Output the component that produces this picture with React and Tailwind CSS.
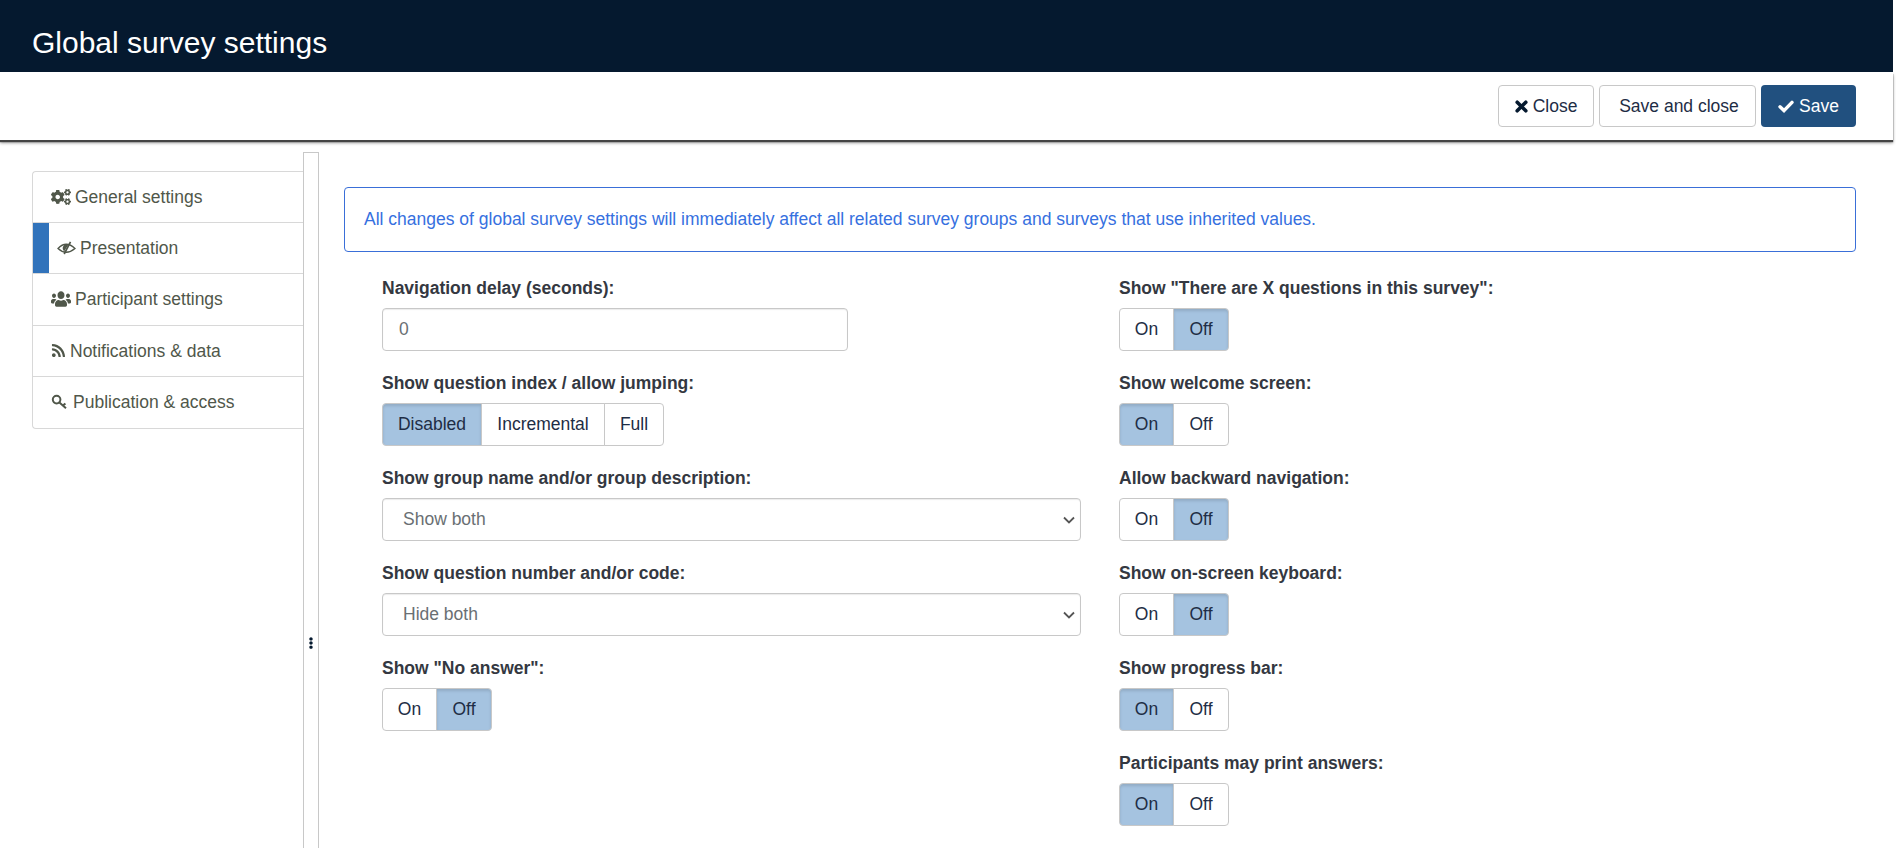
import { useState } from "react";
import { FaCogs, FaEllipsisV, FaRss, FaUsers } from "react-icons/fa";

// font-awesome 4 glyphs that the icon packages draw differently
function EyeSlashIcon() {
  return (
    <svg width="19" height="14" viewBox="0 0 19 14" fill="none" stroke="currentColor">
      <path d="M1 7.5 Q9 -1 18 7.5 Q9 15 1 7.5 Z" strokeWidth="1.3" />
      <path d="M9.5 3.2 a4.2 4.2 0 0 0 -2.4 7.4 L11.5 3.4 Z" fill="currentColor" stroke="none" />
      <path d="M13.5 0.8 L7.2 13" strokeWidth="1.7" />
    </svg>
  );
}

function KeyIcon() {
  return (
    <svg width="17" height="16" viewBox="0 0 17 16" fill="none" stroke="currentColor" strokeWidth="2">
      <circle cx="5.6" cy="5.6" r="3.8" />
      <path d="M8.4 8.4 L15 14.2 M12 11.6 L14.4 9.4" />
    </svg>
  );
}

function TimesIcon() {
  return (
    <svg width="13" height="13" viewBox="0 0 13 13" fill="none" stroke="currentColor" strokeWidth="3.6" strokeLinecap="round">
      <path d="M2.2 2.2 L10.8 10.8 M10.8 2.2 L2.2 10.8" />
    </svg>
  );
}

function CheckIcon() {
  return (
    <svg width="16" height="13" viewBox="0 0 16 13" fill="none" stroke="currentColor" strokeWidth="3.4" strokeLinecap="round">
      <path d="M2 6.8 L6 10.6 L14 2.4" />
    </svg>
  );
}

const menu = [
  { label: "General settings", icon: <FaCogs className="w-[20px] h-[16px]" />, gap: "gap-[4px]" },
  { label: "Presentation", icon: <EyeSlashIcon />, active: true, gap: "gap-[4px]" },
  { label: "Participant settings", icon: <FaUsers className="w-[20px] h-[18px] scale-y-110" />, gap: "gap-[4px]" },
  { label: "Notifications & data", icon: <FaRss className="w-[15px] h-[15px]" />, gap: "gap-[4px]" },
  { label: "Publication & access", icon: <KeyIcon />, gap: "gap-[5px]" },
];

function Field({ label, children }) {
  return (
    <div className="h-[95px]">
      <label className="block h-[30px] text-[17.5px] leading-[21px] font-bold text-[#343841]">{label}</label>
      {children}
    </div>
  );
}

function Choice({ options, value, widths }) {
  const [current, setCurrent] = useState(value);
  return (
    <div className="flex h-[43px] w-fit">
      {options.map((opt, i) => (
        <button
          key={opt}
          onClick={() => setCurrent(opt)}
          style={{ width: widths[i] }}
          className={`h-full border border-[#c8c8c8] -ml-px first:ml-0 first:rounded-l last:rounded-r text-[17.5px] text-[#1e2d45] ${
            current === opt ? "bg-[#a5c3e0] border-[#a9b1ba] shadow-[inset_0_2px_3px_rgba(0,0,0,0.12)]" : "bg-white"
          }`}
        >
          {opt}
        </button>
      ))}
    </div>
  );
}

function Toggle({ value }) {
  return <Choice options={["On", "Off"]} value={value} widths={[55, 56]} />;
}

function Dropdown({ value, options }) {
  return (
    <div className="relative w-[699px] h-[43px]">
      <select
        defaultValue={value}
        className="appearance-none w-full h-full pl-5 pr-8 border border-[#c8c8c8] rounded bg-white text-[17.5px] text-[#6a6f73] shadow-[inset_0_1px_1px_rgba(0,0,0,0.08)]"
      >
        {options.map((opt) => (
          <option key={opt}>{opt}</option>
        ))}
      </select>
      <svg
        className="absolute right-[6px] top-[18px] pointer-events-none text-[#555]"
        width="12"
        height="8"
        viewBox="0 0 12 8"
        fill="none"
        stroke="currentColor"
        strokeWidth="1.8"
      >
        <path d="M1 1.5 L6 6.5 L11 1.5" />
      </svg>
    </div>
  );
}

export default function App() {
  return (
    <div className="h-[848px] overflow-hidden bg-white pr-[3px] flex flex-col font-['Liberation_Sans',Arial,sans-serif]">
      {/* Title bar */}
      <div className="h-[72px] shrink-0 bg-[#05192f] pl-8 pt-[26px]">
        <h1 className="text-[30px] leading-[34px] text-white">Global survey settings</h1>
      </div>

      {/* Toolbar */}
      <div className="relative z-10 h-[68px] shrink-0 bg-white flex justify-end items-start gap-[5px] pt-[13px] pr-[37px] shadow-[0_2px_1px_#444,0_3px_3px_#999]">
        <button className="w-[96px] h-[42px] border border-[#c8c8c8] rounded bg-white text-[17.5px] text-[#1e2d45] flex items-center justify-center gap-[5px]">
          <span className="text-[#05192f]">
            <TimesIcon />
          </span>
          Close
        </button>
        <button className="w-[157px] h-[42px] pl-[3px] border border-[#c8c8c8] rounded bg-white text-[17.5px] text-[#1e2d45]">
          Save and close
        </button>
        <button className="w-[95px] h-[42px] rounded bg-[#21507f] text-[17.5px] text-white flex items-center justify-center gap-[5px]">
          <CheckIcon /> Save
        </button>
      </div>

      <div className="flex-1 flex min-h-0">
        {/* Sidebar */}
        <aside className="w-[303px] shrink-0 pl-8 pt-[31px]">
          <ul className="border border-r-0 border-[#d8d8d8] rounded-l text-[17.5px] text-[#50574a]">
            {menu.map((item) => (
              <li
                key={item.label}
                className={`h-[51.2px] flex items-center ${item.gap} border-b border-[#d8d8d8] last:border-b-0 pl-[18px] relative`}
              >
                {item.active && <span className="absolute left-0 top-0 bottom-0 w-4 bg-[#3173bb]" />}
                <span className={item.active ? "ml-[6px] flex" : "flex"}>{item.icon}</span>
                {item.label}
              </li>
            ))}
          </ul>
        </aside>

        {/* Resize handle */}
        <div className="w-[16px] shrink-0 mt-3 border border-b-0 border-[#c8c8c8] flex justify-center pt-[484px]">
          <FaEllipsisV className="w-[10px] h-[12px] text-[#05192f]" />
        </div>

        {/* Main */}
        <main className="flex-1 pl-[25px] pr-[37px] pt-[47px]">
          <div className="h-[65px] border border-[#3a6fd8] rounded flex items-center pl-[19px] text-[17.5px] text-[#3670e0]">
            All changes of global survey settings will immediately affect all related survey groups and surveys that use inherited values.
          </div>

          <div className="grid grid-cols-[699px_1fr] gap-x-[38px] pl-[38px] pt-[26px]">
            <div>
              <Field label="Navigation delay (seconds):">
                <input
                  defaultValue="0"
                  className="w-[466px] h-[43px] px-4 border border-[#c8c8c8] rounded text-[17.5px] text-[#6a6f73] shadow-[inset_0_1px_1px_rgba(0,0,0,0.08)]"
                />
              </Field>
              <Field label="Show question index / allow jumping:">
                <Choice options={["Disabled", "Incremental", "Full"]} value="Disabled" widths={[100, 124, 60]} />
              </Field>
              <Field label="Show group name and/or group description:">
                <Dropdown value="Show both" options={["Show both", "Show group name only", "Show group description only", "Hide both"]} />
              </Field>
              <Field label="Show question number and/or code:">
                <Dropdown value="Hide both" options={["Show both", "Show question number only", "Show question code only", "Hide both"]} />
              </Field>
              <Field label={'Show "No answer":'}>
                <Toggle value="Off" />
              </Field>
            </div>
            <div>
              <Field label={'Show "There are X questions in this survey":'}>
                <Toggle value="Off" />
              </Field>
              <Field label="Show welcome screen:">
                <Toggle value="On" />
              </Field>
              <Field label="Allow backward navigation:">
                <Toggle value="Off" />
              </Field>
              <Field label="Show on-screen keyboard:">
                <Toggle value="Off" />
              </Field>
              <Field label="Show progress bar:">
                <Toggle value="On" />
              </Field>
              <Field label="Participants may print answers:">
                <Toggle value="On" />
              </Field>
            </div>
          </div>
        </main>
      </div>
    </div>
  );
}
